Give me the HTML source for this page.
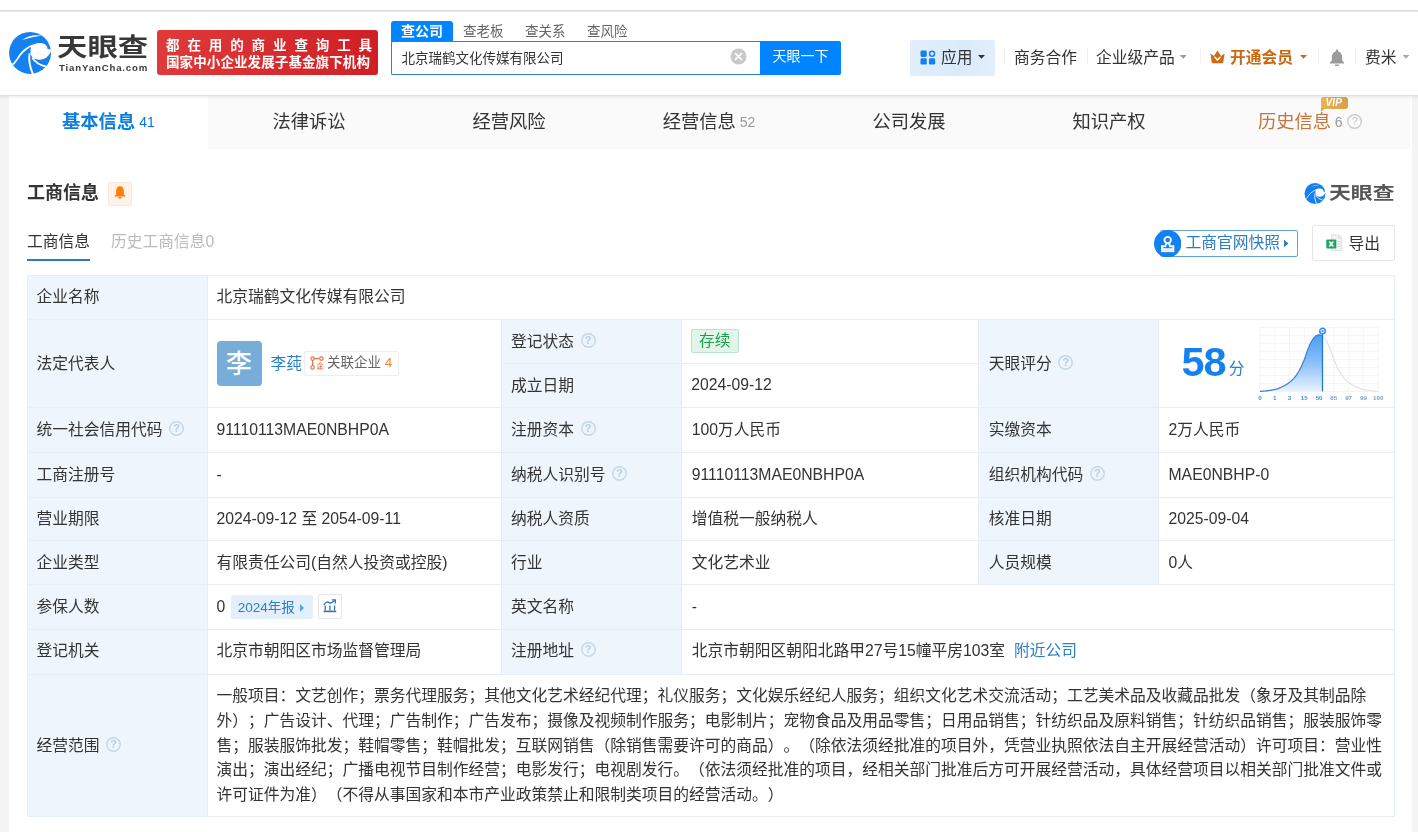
<!DOCTYPE html>
<html lang="zh-CN">
<head>
<meta charset="utf-8">
<title>北京瑞鹤文化传媒有限公司 - 天眼查</title>
<style>
*{box-sizing:border-box;margin:0;padding:0}
html,body{width:1418px;height:832px;overflow:hidden}
body{background:#f4f4f4;font-family:"Liberation Sans","Noto Sans CJK SC",sans-serif;color:#333;font-size:16px;position:relative}
.abs{position:absolute;will-change:transform}
#topstrip{left:0;top:0;width:1418px;height:10px;background:#fff}
#topline{left:0;top:10px;width:1418px;height:2px;background:linear-gradient(#dcdcdc,#e6e6e6)}
#header{left:0;top:12px;width:1418px;height:83.2px;background:#fff;}
/* logo */
#logoicon{left:4px;top:26px;width:56px;height:54px}
#logotext{left:57px;top:30px;font-size:25px;line-height:34px;font-weight:700;color:#383838;letter-spacing:0px;white-space:nowrap;transform:scaleX(1.215);transform-origin:0 0}
#logosub{left:59px;top:61.5px;font-size:9.6px;line-height:12px;font-weight:700;color:#383838;letter-spacing:0.86px;white-space:nowrap}
#banner{left:157px;top:30px;width:221px;height:45px;border-radius:3px;background:linear-gradient(90deg,#e03a3a,#cf1f25);color:#fff;font-weight:700;white-space:nowrap}
#banner .l1{position:absolute;left:9px;top:6.5px;font-size:13.5px;line-height:18px;letter-spacing:7.9px}
#banner .l2{position:absolute;left:9px;top:24.3px;font-size:13.5px;line-height:18px;letter-spacing:0.1px}
/* search */
.stab{top:21px;height:20.5px;line-height:22px;font-size:13.5px;color:#666;white-space:nowrap}
#stab1{left:391px;width:62px;background:#0084ff;color:#fff;text-align:center;border-radius:3px 3px 0 0;font-weight:700;font-size:14px;line-height:21px}
#sinput{left:391px;top:41px;width:370px;height:34px;border:1px solid #2c85c4;border-right:none;border-radius:2px 0 0 2px;background:#fff;font-size:13.5px;line-height:34.5px;padding-left:9.5px;color:#333;white-space:nowrap}
#sclear{left:730px;top:48px;width:17px;height:17px}
#sbtn{left:760px;top:41px;width:81px;height:34px;background:#0084ff;color:#fff;font-size:14px;line-height:30.5px;text-align:center;border-radius:0 2px 2px 0;white-space:nowrap}
/* right nav */
.nav{top:47px;font-size:15.75px;line-height:22px;color:#333;white-space:nowrap}
.caret{display:inline-block;width:7px;height:3.8px;background:#999;clip-path:polygon(0 0,100% 0,50% 100%);vertical-align:middle;margin-left:5px;position:relative;top:-2px}
.sep{top:48px;width:1px;height:16px;background:#f1f1f1}
#appbtn{left:910px;top:40px;width:85px;height:35.5px;background:linear-gradient(100deg,#e1eefc,#d9ebfb 60%,#e3effc);border-radius:2px}
/* tabs */
#tabs{left:9px;top:95.5px;width:1400.5px;height:53.2px;background:#fafafa}
.tab{top:96px;width:200px;height:52px;line-height:51px;text-align:center;font-size:18.3px;color:#333;white-space:nowrap}
.tab small{font-size:14px;color:#999;margin-left:4px;position:relative;top:-1.3px;font-family:"Liberation Sans",sans-serif}
#tab1{left:9px;background:#fff;color:#0a7fe0;font-weight:700;width:198.8px;top:95.5px;height:53.2px;line-height:51px}
#tab1 small{color:#0077d9;font-weight:400}
#main{left:9px;top:95.5px;width:1403.3px;height:740px;background:#fff}
/* section */
#sectitle{left:27px;top:181px;font-size:18px;line-height:24px;font-weight:700;color:#333;white-space:nowrap}
#bellbox{left:108px;top:182px;width:24px;height:24px;background:#fdf3ea;border:1px solid #fbe8d8;border-radius:2px}
#sub1{left:27px;top:230.5px;font-size:15.75px;line-height:22px;color:#333;white-space:nowrap}
#sub1line{left:27px;top:258.7px;width:63px;height:2.4px;background:#2e7cb8}
#sub2{left:111px;top:230.5px;font-size:15.75px;line-height:22px;color:#bbb;white-space:nowrap}
#wm{left:1305px;top:181px;white-space:nowrap}
#snapbtn{left:1160px;top:230px;width:138px;height:26.5px;border:1px solid #62a3d8;border-radius:2px;background:#fff}
#snapbtn .t{position:absolute;left:24.5px;top:1px;font-size:15.75px;line-height:22px;color:#2e7cc4;white-space:nowrap}
#expbtn{left:1312px;top:225px;width:83px;height:36px;border:1px solid #e6e6e6;border-radius:2px;background:#fff}
#expbtn .t{position:absolute;left:35.5px;top:6.5px;font-size:15.75px;line-height:22px;color:#333;white-space:nowrap}
/* table */
#tbl{left:27px;top:275px;width:1368px;height:542px;border:1px solid #e3edf3;background:#fff}
.c{position:absolute;border-right:1px solid #e6edf2;border-bottom:1px solid #e9edf0;font-size:15.75px;line-height:22px;text-spacing-trim:space-all;color:#333;white-space:nowrap;padding-left:8.5px;display:flex;align-items:center}
.l{background:#eff5fc;border-bottom-color:#e6eef6}
.q{display:inline-block;width:15px;height:15px;box-shadow:inset 0 0 0 1.5px #c3d8e7;border-radius:50%;color:#b5cee0;font-size:11px;font-weight:700;line-height:15px;text-align:center;margin-left:6.5px;font-family:"Liberation Sans",sans-serif;position:relative;top:-1.2px}
a,.lnk{color:#2b7fc5;text-decoration:none}

#tbl{border:none;border-left:1px solid #e6edf2;border-top:1px solid #e9edf0}
.avatar{display:inline-block;width:45px;height:45px;border-radius:4px;background:#78acd9;color:#fff;font-size:26px;font-weight:500;line-height:46px;text-align:center}
.rel{display:inline-block;margin-left:2px;height:25px;border:1px solid #eee;border-radius:2px;padding:0 5px 0 5px;font-size:13.5px;line-height:22px;color:#666}
.rel b{color:#e8873a;font-weight:400}
.tag-g{display:inline-block;height:25px;line-height:23px;padding:0 7px;border:1px solid #bfe8cc;background:#e4f7ea;color:#1f9d4c;font-size:15px;border-radius:2px}
.tag-b{display:inline-block;height:24px;line-height:25px;padding:0 9.3px 0 7px;margin-left:5.5px;background:#e3f0fc;color:#2b7fc5;font-size:13.5px;border-radius:2px;position:relative;top:-0.5px}
.tri{display:inline-block;width:4.2px;height:8.2px;background:#5a9fe0;clip-path:polygon(0 0,100% 50%,0 100%);margin-left:5px;position:relative;top:0.5px}
.ico-box{display:inline-flex;align-items:center;justify-content:center;width:24px;height:25px;border:1px solid #e3e8ee;border-radius:2px;margin-left:5px;position:relative;top:-1px}
.scope{white-space:nowrap;line-height:24.75px;font-size:15.75px;text-spacing-trim:space-all;position:relative;top:0.6px}

#vip{left:1321px;top:97px;width:27px;height:12px;border-radius:2px 3px 3px 0;background:linear-gradient(90deg,#e9b556,#d9a040);}
#vip span{position:absolute;left:4.5px;top:-0.5px;font-size:10px;line-height:12px;font-weight:700;font-style:italic;color:#fff;letter-spacing:0.2px;font-family:"Liberation Sans",sans-serif}
#vip i{position:absolute;left:0;top:11px;width:4px;height:4px;background:#dca548;clip-path:polygon(0 0,100% 0,0 100%)}
#wmtext{left:1329px;top:181px;font-size:17.5px;line-height:24px;font-weight:700;color:#555;white-space:nowrap;transform:scaleX(1.25);transform-origin:0 0}

.sc58{font-family:"Liberation Sans",sans-serif;font-weight:700;font-size:41.5px;line-height:44px;color:#1580f0;margin-left:13px;letter-spacing:-1px;position:relative;top:-1.2px}
.scfen{font-size:15.75px;color:#2b7fc5;margin-left:3px;position:relative;top:5.5px}
.tag-g{height:24px;line-height:22px;padding:0 7.5px;font-size:15.75px;border-color:#b8e4c7;background:#e0f6e8}
.rel{padding-right:6px}
#hshadow{left:0;top:95px;width:1418px;height:4.5px;background:linear-gradient(rgba(0,0,0,.085),rgba(0,0,0,.03) 45%,rgba(0,0,0,0))}
</style>
</head>
<body>
<div class="abs" id="topstrip"></div>
<div class="abs" id="topline"></div>
<div class="abs" id="header"></div>

<!-- logo -->
<svg class="abs" id="logoicon" viewBox="0 0 863 832">
  <circle cx="401.5" cy="415" r="323" fill="#1580f0"/>
  <path d="M420 300 C480 255 590 245 645 292 Q675 325 668 350 L740 368 L740 400 L722 396 Q700 445 650 488 Q560 545 450 497 Q385 440 420 300Z" fill="#fff"/>
  <path d="M280 215 Q400 120 585 148 Q440 168 280 215Z" fill="#fff"/>
  <path d="M118 590 Q160 560 230 445 Q310 340 430 290 L440 312 Q330 360 255 460 Q190 560 150 600Z" fill="#fff"/>
  <path d="M396 420 Q368 560 445 740" fill="none" stroke="#fff" stroke-width="30"/>
  <path d="M436 488 Q500 590 655 628" fill="none" stroke="#fff" stroke-width="28"/>
</svg>
<div class="abs" id="logotext">天眼查</div>
<div class="abs" id="logosub">TianYanCha.com</div>
<div class="abs" id="banner"><div class="l1">都在用的商业查询工具</div><div class="l2">国家中小企业发展子基金旗下机构</div></div>

<!-- search -->
<div class="abs stab" id="stab1">查公司</div>
<div class="abs stab" style="left:463px">查老板</div>
<div class="abs stab" style="left:525px">查关系</div>
<div class="abs stab" style="left:587px">查风险</div>
<div class="abs" id="sinput">北京瑞鹤文化传媒有限公司</div>
<svg class="abs" id="sclear" viewBox="0 0 17 17"><circle cx="8.5" cy="8.5" r="8" fill="#c9c9c9"/><path d="M5.6 5.6l5.8 5.8M11.4 5.6l-5.8 5.8" stroke="#fff" stroke-width="1.6" stroke-linecap="round"/></svg>
<div class="abs" id="sbtn">天眼一下</div>

<!-- right nav -->
<div class="abs" id="appbtn"></div>
<svg class="abs" style="left:920px;top:50px;width:16px;height:15px" viewBox="0 0 16 15"><g fill="#1580f0"><rect x="0.5" y="0.6" width="6.3" height="6.3" rx="1.4"/><rect x="0.5" y="8.3" width="6.3" height="6.3" rx="1.4"/><rect x="8.9" y="8.3" width="6.3" height="6.3" rx="1.4"/></g><circle cx="12.05" cy="3.75" r="2.5" fill="none" stroke="#1580f0" stroke-width="1.5"/></svg>
<div class="abs nav" style="left:941px">应用<span class="caret" style="background:#333;margin-left:5.5px"></span></div>
<div class="abs sep" style="left:1004px"></div>
<div class="abs nav" style="left:1014px">商务合作</div>
<div class="abs sep" style="left:1087px"></div>
<div class="abs nav" style="left:1096px">企业级产品<span class="caret"></span></div>
<div class="abs sep" style="left:1200px"></div>
<svg class="abs" style="left:1210px;top:50px;width:15px;height:14px" viewBox="0 0 15 14"><path d="M0.4 3.4 L3.9 6 L7.5 0.5 L11.1 6 L14.6 3.4 L13.3 12.2 Q13.2 13.2 12.2 13.2 L2.8 13.2 Q1.8 13.2 1.7 12.2Z" fill="#cf6b17"/><path d="M4.9 7.2 L7.5 10 L10.1 7.2" fill="none" stroke="#fff" stroke-width="1.5" stroke-linecap="round" stroke-linejoin="round"/></svg>
<div class="abs nav" style="left:1230px;color:#c8690f;font-weight:700">开通会员<span class="caret" style="background:#c8690f;margin-left:7px"></span></div>
<div class="abs sep" style="left:1318px"></div>
<svg class="abs" style="left:1329px;top:49px;width:16px;height:18px" viewBox="0 0 16 18"><path d="M8 0.6 a1.3 1.3 0 0 1 1.3 1.3 v0.5 C12 3.2 13.2 5.4 13.2 8 V11.6 L15 13.6 V14.4 H1 V13.6 L2.8 11.6 V8 C2.8 5.4 4 3.2 6.7 2.4 V1.9 A1.3 1.3 0 0 1 8 0.6Z" fill="#9b9b9b"/><rect x="5.8" y="15.6" width="4.4" height="1.3" rx="0.6" fill="#9b9b9b"/></svg>
<div class="abs sep" style="left:1355px"></div>
<div class="abs nav" style="left:1365px">费米<span class="caret" style="margin-left:6px;background:#aaa"></span></div>

<!-- tabs -->
<div class="abs" id="main"></div>
<div class="abs" id="tabs"></div>
<div class="abs tab" id="tab1">基本信息<small>41</small></div>
<div class="abs tab" style="left:208.75px">法律诉讼</div>
<div class="abs tab" style="left:408.75px">经营风险</div>
<div class="abs tab" style="left:608.75px">经营信息<small>52</small></div>
<div class="abs tab" style="left:808.75px">公司发展</div>
<div class="abs tab" style="left:1008.75px">知识产权</div>
<div class="abs tab" style="left:1258px;width:auto;text-align:left;color:#c8733c">历史信息<small style="margin-left:3.5px">6</small><span class="q" style="box-shadow:inset 0 0 0 1.4px #cbcbcb;color:#c2c2c2;margin-left:5px;top:-2px;vertical-align:middle;font-weight:400">?</span></div>
<div class="abs" id="vip"><i></i><span>VIP</span></div>

<div class="abs" id="hshadow"></div>
<!-- section -->
<div class="abs" id="sectitle">工商信息</div>
<div class="abs" id="bellbox"></div>
<svg class="abs" style="left:114px;top:186px;width:12px;height:13px" viewBox="0 0 12 13"><path d="M6 0.2 C8.6 0.2 9.8 2.2 9.8 4.6 V8 L11.3 9.8 V10.4 H0.7 V9.8 L2.2 8 V4.6 C2.2 2.2 3.4 0.2 6 0.2Z" fill="#ff7d00"/><path d="M4.2 11 H7.8 A1.8 1.8 0 0 1 4.2 11Z" fill="#ff7d00"/></svg>
<div class="abs" id="sub1">工商信息</div>
<div class="abs" id="sub1line"></div>
<div class="abs" id="sub2">历史工商信息0</div>
<svg class="abs" style="left:1302px;top:180px;width:28px;height:27px" viewBox="0 0 863 832">
  <circle cx="401.5" cy="415" r="323" fill="#1580f0"/>
  <path d="M420 300 C480 258 590 250 640 295 Q668 325 662 352 L735 372 L735 398 L718 396 Q700 445 650 488 Q560 540 450 495 Q395 440 420 300Z" fill="#fff"/>
  <path d="M288 208 Q420 138 580 150 Q430 168 288 208Z" fill="#fff"/>
  <path d="M130 580 Q230 390 425 296" fill="none" stroke="#fff" stroke-width="22"/>
  <path d="M396 420 Q372 560 447 735" fill="none" stroke="#fff" stroke-width="26"/>
  <path d="M440 492 Q500 590 650 625" fill="none" stroke="#fff" stroke-width="24"/>
</svg>
<div class="abs" id="wmtext">天眼查</div>
<div class="abs" id="snapbtn"><span class="t">工商官网快照</span><i style="position:absolute;left:123px;top:8.7px;width:4.5px;height:7.6px;background:#2e7cc4;clip-path:polygon(0 0,100% 50%,0 100%)"></i></div>
<svg class="abs" style="left:1154px;top:229.7px;width:27.4px;height:27.4px" viewBox="0 0 28 28"><circle cx="14" cy="14" r="14" fill="#1580f0"/><g fill="none" stroke="#fff" stroke-width="1.9"><circle cx="14" cy="10.3" r="3.3"/><path d="M12.6 13.2 L11.6 16.6 H8.2 V19.6 H19.8 V16.6 H16.4 L15.4 13.2"/></g><rect x="7.2" y="20.6" width="13.6" height="2" fill="#fff"/></svg>
<div class="abs" id="expbtn"><span class="t">导出</span></div>
<svg class="abs" style="left:1326px;top:234px;width:17px;height:18px" viewBox="0 0 17 18"><path d="M5.5 0.8 H12.5 L15.8 4 V16.6 H5.5Z" fill="#f4f4f4" stroke="#d9d9d9" stroke-width="0.8"/><path d="M12.5 0.8 V4 H15.8" fill="#e6e6e6" stroke="#d9d9d9" stroke-width="0.6"/><path d="M11.5 7.5h3M11.5 10h3M11.5 12.5h3" stroke="#d0d0d0" stroke-width="0.9"/><rect x="0.3" y="5.4" width="10" height="9.2" rx="0.8" fill="#21a366"/><path d="M3.2 7.6 L7.4 12.4 M7.4 7.6 L3.2 12.4" stroke="#fff" stroke-width="1.5"/></svg>

<!-- table -->
<div class="abs" id="tbl">
<div class="c l" style="left:0px;top:0px;width:180px;height:44px;padding-bottom:1.3px;padding-left:8.5px;">企业名称</div>
<div class="c" style="left:180px;top:0px;width:1187px;height:44px;padding-bottom:1.3px;padding-left:8.5px;">北京瑞鹤文化传媒有限公司</div>
<div class="c l" style="left:0px;top:44px;width:180px;height:88px;padding-left:8.5px;">法定代表人</div>
<div class="c" style="left:180px;top:44px;width:294px;height:88px;padding-left:8.5px;"><span class="avatar">李</span><span class="lnk" style="margin-left:9px">李莼</span><span class="rel"><svg width="14" height="14" viewBox="0 0 14 14" style="vertical-align:-2.5px;margin-right:3px"><g fill="none" stroke="#e8734a" stroke-width="1.2"><circle cx="2.6" cy="2.6" r="1.7"/><circle cx="11.4" cy="2.6" r="1.7"/><circle cx="2.6" cy="11.4" r="1.7"/><path d="M4.3 2.6h5.4M2.6 4.3v5.4"/><path d="M7.2 9.3 L10.2 6.8 L13.2 9.3M10.2 8.6V12.6M10.2 10.6h2.2M8.2 10.4v2.2M7.2 12.9h6" stroke-width="1"/></g></svg>关联企业 <b>4</b></span></div>
<div class="c l" style="left:474px;top:44px;width:180px;height:44px;padding-left:9.1px;">登记状态<span class="q">?</span></div>
<div class="c" style="left:654px;top:44px;width:297px;height:44px;padding-left:8.6px;padding-bottom:2px;"><span class="tag-g">存续</span></div>
<div class="c l" style="left:474px;top:88px;width:180px;height:44px;padding-left:9.1px;">成立日期</div>
<div class="c" style="left:654px;top:88px;width:297px;height:44px;padding-left:9.3px;padding-bottom:2px;">2024-09-12</div>
<div class="c l" style="left:951px;top:44px;width:180px;height:88px;padding-left:9.8px;">天眼评分<span class="q">?</span></div>
<div class="c" style="left:1131px;top:44px;width:236px;height:88px;padding-left:9.5px;"><span class="sc58">58</span><span class="scfen">分</span></div>
<div class="c l" style="left:0px;top:132px;width:180px;height:45px;padding-left:8.5px;">统一社会信用代码<span class="q">?</span></div>
<div class="c" style="left:180px;top:132px;width:294px;height:45px;padding-left:8.5px;">91110113MAE0NBHP0A</div>
<div class="c l" style="left:474px;top:132px;width:180px;height:45px;padding-left:9.1px;">注册资本<span class="q">?</span></div>
<div class="c" style="left:654px;top:132px;width:297px;height:45px;padding-left:9.7px;">100万人民币</div>
<div class="c l" style="left:951px;top:132px;width:180px;height:45px;padding-left:9.8px;">实缴资本</div>
<div class="c" style="left:1131px;top:132px;width:236px;height:45px;padding-left:9.5px;">2万人民币</div>
<div class="c l" style="left:0px;top:177px;width:180px;height:45px;padding-left:8.5px;">工商注册号</div>
<div class="c" style="left:180px;top:177px;width:294px;height:45px;padding-left:8.5px;">-</div>
<div class="c l" style="left:474px;top:177px;width:180px;height:45px;padding-left:9.1px;">纳税人识别号<span class="q">?</span></div>
<div class="c" style="left:654px;top:177px;width:297px;height:45px;padding-left:9.7px;">91110113MAE0NBHP0A</div>
<div class="c l" style="left:951px;top:177px;width:180px;height:45px;padding-left:9.8px;">组织机构代码<span class="q">?</span></div>
<div class="c" style="left:1131px;top:177px;width:236px;height:45px;padding-left:9.5px;">MAE0NBHP-0</div>
<div class="c l" style="left:0px;top:222px;width:180px;height:43px;padding-left:8.5px;">营业期限</div>
<div class="c" style="left:180px;top:222px;width:294px;height:43px;padding-left:8.5px;">2024-09-12 至 2054-09-11</div>
<div class="c l" style="left:474px;top:222px;width:180px;height:43px;padding-left:9.1px;">纳税人资质</div>
<div class="c" style="left:654px;top:222px;width:297px;height:43px;padding-left:9.7px;">增值税一般纳税人</div>
<div class="c l" style="left:951px;top:222px;width:180px;height:43px;padding-left:9.8px;">核准日期</div>
<div class="c" style="left:1131px;top:222px;width:236px;height:43px;padding-left:9.5px;">2025-09-04</div>
<div class="c l" style="left:0px;top:265px;width:180px;height:44px;padding-left:8.5px;">企业类型</div>
<div class="c" style="left:180px;top:265px;width:294px;height:44px;padding-left:8.5px;">有限责任公司(自然人投资或控股)</div>
<div class="c l" style="left:474px;top:265px;width:180px;height:44px;padding-left:9.1px;">行业</div>
<div class="c" style="left:654px;top:265px;width:297px;height:44px;padding-left:9.7px;">文化艺术业</div>
<div class="c l" style="left:951px;top:265px;width:180px;height:44px;padding-left:9.8px;">人员规模</div>
<div class="c" style="left:1131px;top:265px;width:236px;height:44px;padding-left:9.5px;">0人</div>
<div class="c l" style="left:0px;top:309px;width:180px;height:45px;padding-left:8.5px;">参保人数</div>
<div class="c" style="left:180px;top:309px;width:294px;height:45px;padding-left:8.5px;">0<span class="tag-b">2024年报<i class="tri"></i></span><span class="ico-box"><svg width="14" height="14" viewBox="0 0 14 14"><g fill="none" stroke="#2e72b8" stroke-width="1.3"><path d="M0.6 12.4H13.2" stroke-width="1.6"/><path d="M2.2 11.4V6.6M6.9 11.4V6.6M11.6 11.4V6.6"/><path d="M0.8 6.2 Q3.5 1.6 6 3.6 Q8 5 11.8 1.2"/><path d="M8.8 0.9H12.3V4.4"/></g></svg></span></div>
<div class="c l" style="left:474px;top:309px;width:180px;height:45px;padding-left:9.1px;">英文名称</div>
<div class="c" style="left:654px;top:309px;width:713px;height:45px;padding-left:9.7px;">-</div>
<div class="c l" style="left:0px;top:354px;width:180px;height:45px;padding-bottom:2px;padding-left:8.5px;">登记机关</div>
<div class="c" style="left:180px;top:354px;width:294px;height:45px;padding-bottom:2px;padding-left:8.5px;">北京市朝阳区市场监督管理局</div>
<div class="c l" style="left:474px;top:354px;width:180px;height:45px;padding-bottom:2px;padding-left:9.1px;">注册地址<span class="q">?</span></div>
<div class="c" style="left:654px;top:354px;width:713px;height:45px;padding-bottom:2px;padding-left:9.7px;">北京市朝阳区朝阳北路甲27号15幢平房103室<span class="lnk" style="margin-left:9px">附近公司</span></div>
<div class="c l" style="left:0px;top:399px;width:180px;height:142px;padding-left:8.5px;">经营范围<span class="q">?</span></div>
<div class="c" style="left:180px;top:399px;width:1187px;height:142px;padding-left:8.5px;"><div class="scope">一般项目：文艺创作；票务代理服务；其他文化艺术经纪代理；礼仪服务；文化娱乐经纪人服务；组织文化艺术交流活动；工艺美术品及收藏品批发（象牙及其制品除<br>外）；广告设计、代理；广告制作；广告发布；摄像及视频制作服务；电影制片；宠物食品及用品零售；日用品销售；针纺织品及原料销售；针纺织品销售；服装服饰零<br>售；服装服饰批发；鞋帽零售；鞋帽批发；互联网销售（除销售需要许可的商品）。（除依法须经批准的项目外，凭营业执照依法自主开展经营活动）许可项目：营业性<br>演出；演出经纪；广播电视节目制作经营；电影发行；电视剧发行。（依法须经批准的项目，经相关部门批准后方可开展经营活动，具体经营项目以相关部门批准文件或<br>许可证件为准）（不得从事国家和本市产业政策禁止和限制类项目的经营活动。）</div></div>
</div>
<svg class="abs" id="chart" style="left:1256px;top:324px;width:128px;height:80px" viewBox="0 0 128 80">
<defs><linearGradient id="gfill" x1="0" y1="0" x2="0" y2="1"><stop offset="0" stop-color="#4a9df3"/><stop offset="0.5" stop-color="#8cc0f8"/><stop offset="1" stop-color="#e9f3fe"/></linearGradient></defs>
<path d="M3.9 3.4 V67.5 M18.7 3.4 V67.5 M33.5 3.4 V67.5 M48.3 3.4 V67.5 M63.1 3.4 V67.5 M77.8 3.4 V67.5 M92.6 3.4 V67.5 M107.4 3.4 V67.5 M122.2 3.4 V67.5 M3.9 3.4 H122.2 M3.9 11.4 H122.2 M3.9 19.4 H122.2 M3.9 27.4 H122.2 M3.9 35.5 H122.2 M3.9 43.5 H122.2 M3.9 51.5 H122.2 M3.9 59.5 H122.2 M3.9 67.5 H122.2" fill="none" stroke="#eff3f7" stroke-width="0.8"/>
<path d="M3.9 67.3 L4.4 67.3 L4.9 67.3 L5.4 67.3 L5.9 67.2 L6.4 67.2 L6.9 67.2 L7.4 67.2 L7.9 67.1 L8.4 67.1 L8.9 67.0 L9.3 67.0 L9.8 66.9 L10.3 66.9 L10.8 66.8 L11.3 66.8 L11.8 66.7 L12.3 66.6 L12.8 66.5 L13.3 66.5 L13.8 66.4 L14.3 66.3 L14.8 66.2 L15.3 66.1 L15.8 66.1 L16.2 66.0 L16.7 65.9 L17.2 65.8 L17.7 65.7 L18.2 65.6 L18.7 65.5 L19.2 65.4 L19.7 65.3 L20.2 65.2 L20.7 65.0 L21.2 64.9 L21.7 64.7 L22.2 64.5 L22.7 64.3 L23.1 64.1 L23.6 63.9 L24.1 63.7 L24.6 63.5 L25.1 63.3 L25.6 63.0 L26.1 62.8 L26.6 62.6 L27.1 62.3 L27.6 62.1 L28.1 61.8 L28.6 61.6 L29.1 61.3 L29.6 61.0 L30.0 60.7 L30.5 60.4 L31.0 60.1 L31.5 59.8 L32.0 59.4 L32.5 59.1 L33.0 58.7 L33.5 58.3 L34.0 57.9 L34.5 57.5 L35.0 57.1 L35.5 56.7 L36.0 56.2 L36.5 55.8 L36.9 55.3 L37.4 54.8 L37.9 54.2 L38.4 53.7 L38.9 53.1 L39.4 52.5 L39.9 51.8 L40.4 51.1 L40.9 50.4 L41.4 49.6 L41.9 48.8 L42.4 48.0 L42.9 47.2 L43.4 46.3 L43.8 45.4 L44.3 44.4 L44.8 43.4 L45.3 42.4 L45.8 41.3 L46.3 40.2 L46.8 39.0 L47.3 37.8 L47.8 36.7 L48.3 35.5 L48.8 34.2 L49.3 32.9 L49.8 31.5 L50.3 30.0 L50.7 28.6 L51.2 27.2 L51.7 25.9 L52.2 24.6 L52.7 23.4 L53.2 22.2 L53.7 21.1 L54.2 20.0 L54.7 18.9 L55.2 18.0 L55.7 17.1 L56.2 16.3 L56.7 15.5 L57.2 14.8 L57.6 14.1 L58.1 13.6 L58.6 13.1 L59.1 12.6 L59.6 12.1 L60.1 11.8 L60.6 11.5 L61.1 11.3 L61.6 11.1 L62.1 11.0 L62.6 10.9 L63.1 10.8 L63.6 10.9 L64.1 11.0 L64.5 11.1 L65.0 11.3 L65.5 11.5 L66.0 11.8 L66.5 12.1 L66.5 67.5 L3.9 67.5Z" fill="url(#gfill)"/>
<path d="M66.5 12.1 L67.0 12.6 L67.5 13.1 L68.0 13.6 L68.5 14.1 L69.0 14.8 L69.5 15.5 L70.0 16.3 L70.5 17.1 L70.9 18.0 L71.4 18.9 L71.9 20.0 L72.4 21.1 L72.9 22.2 L73.4 23.4 L73.9 24.6 L74.4 25.9 L74.9 27.2 L75.4 28.6 L75.9 30.0 L76.4 31.5 L76.9 32.9 L77.4 34.2 L77.8 35.5 L78.3 36.7 L78.8 37.8 L79.3 39.0 L79.8 40.2 L80.3 41.3 L80.8 42.4 L81.3 43.4 L81.8 44.4 L82.3 45.4 L82.8 46.3 L83.3 47.2 L83.8 48.0 L84.3 48.8 L84.7 49.6 L85.2 50.4 L85.7 51.1 L86.2 51.8 L86.7 52.5 L87.2 53.1 L87.7 53.7 L88.2 54.2 L88.7 54.8 L89.2 55.3 L89.7 55.8 L90.2 56.2 L90.7 56.7 L91.2 57.1 L91.6 57.5 L92.1 57.9 L92.6 58.3 L93.1 58.7 L93.6 59.1 L94.1 59.4 L94.6 59.8 L95.1 60.1 L95.6 60.4 L96.1 60.7 L96.6 61.0 L97.1 61.3 L97.6 61.6 L98.1 61.8 L98.5 62.1 L99.0 62.3 L99.5 62.6 L100.0 62.8 L100.5 63.0 L101.0 63.3 L101.5 63.5 L102.0 63.7 L102.5 63.9 L103.0 64.1 L103.5 64.3 L104.0 64.5 L104.5 64.7 L105.0 64.9 L105.4 65.0 L105.9 65.2 L106.4 65.3 L106.9 65.4 L107.4 65.5 L107.9 65.6 L108.4 65.7 L108.9 65.8 L109.4 65.9 L109.9 66.0 L110.4 66.1 L110.9 66.1 L111.4 66.2 L111.9 66.3 L112.3 66.4 L112.8 66.5 L113.3 66.5 L113.8 66.6 L114.3 66.7 L114.8 66.8 L115.3 66.8 L115.8 66.9 L116.3 66.9 L116.8 67.0 L117.3 67.0 L117.8 67.1 L118.3 67.1 L118.8 67.2 L119.2 67.2 L119.7 67.2 L120.2 67.2 L120.7 67.3 L121.2 67.3 L121.7 67.3 L122.2 67.3" fill="none" stroke="#dcdfe3" stroke-width="1.1"/>
<path d="M3.9 67.3 L4.4 67.3 L4.9 67.3 L5.4 67.3 L5.9 67.2 L6.4 67.2 L6.9 67.2 L7.4 67.2 L7.9 67.1 L8.4 67.1 L8.9 67.0 L9.3 67.0 L9.8 66.9 L10.3 66.9 L10.8 66.8 L11.3 66.8 L11.8 66.7 L12.3 66.6 L12.8 66.5 L13.3 66.5 L13.8 66.4 L14.3 66.3 L14.8 66.2 L15.3 66.1 L15.8 66.1 L16.2 66.0 L16.7 65.9 L17.2 65.8 L17.7 65.7 L18.2 65.6 L18.7 65.5 L19.2 65.4 L19.7 65.3 L20.2 65.2 L20.7 65.0 L21.2 64.9 L21.7 64.7 L22.2 64.5 L22.7 64.3 L23.1 64.1 L23.6 63.9 L24.1 63.7 L24.6 63.5 L25.1 63.3 L25.6 63.0 L26.1 62.8 L26.6 62.6 L27.1 62.3 L27.6 62.1 L28.1 61.8 L28.6 61.6 L29.1 61.3 L29.6 61.0 L30.0 60.7 L30.5 60.4 L31.0 60.1 L31.5 59.8 L32.0 59.4 L32.5 59.1 L33.0 58.7 L33.5 58.3 L34.0 57.9 L34.5 57.5 L35.0 57.1 L35.5 56.7 L36.0 56.2 L36.5 55.8 L36.9 55.3 L37.4 54.8 L37.9 54.2 L38.4 53.7 L38.9 53.1 L39.4 52.5 L39.9 51.8 L40.4 51.1 L40.9 50.4 L41.4 49.6 L41.9 48.8 L42.4 48.0 L42.9 47.2 L43.4 46.3 L43.8 45.4 L44.3 44.4 L44.8 43.4 L45.3 42.4 L45.8 41.3 L46.3 40.2 L46.8 39.0 L47.3 37.8 L47.8 36.7 L48.3 35.5 L48.8 34.2 L49.3 32.9 L49.8 31.5 L50.3 30.0 L50.7 28.6 L51.2 27.2 L51.7 25.9 L52.2 24.6 L52.7 23.4 L53.2 22.2 L53.7 21.1 L54.2 20.0 L54.7 18.9 L55.2 18.0 L55.7 17.1 L56.2 16.3 L56.7 15.5 L57.2 14.8 L57.6 14.1 L58.1 13.6 L58.6 13.1 L59.1 12.6 L59.6 12.1 L60.1 11.8 L60.6 11.5 L61.1 11.3 L61.6 11.1 L62.1 11.0 L62.6 10.9 L63.1 10.8 L63.6 10.9 L64.1 11.0 L64.5 11.1 L65.0 11.3 L65.5 11.5 L66.0 11.8 L66.5 12.1" fill="none" stroke="#2f7fd6" stroke-width="1.2"/>
<path d="M66.5 8.8 V67.5" stroke="#2478d0" stroke-width="1.3"/>
<circle cx="66.5" cy="7.1" r="2.8" fill="#fff" stroke="#2f86e6" stroke-width="1.4"/>
<circle cx="66.5" cy="7.1" r="1.1" fill="#2f86e6"/>
<g font-family="Liberation Sans, sans-serif" font-size="6.2" font-weight="700"><text x="3.9" y="75.9" text-anchor="middle" fill="#3f8fe8">0</text><text x="18.7" y="75.9" text-anchor="middle" fill="#3f8fe8">1</text><text x="33.5" y="75.9" text-anchor="middle" fill="#3f8fe8">3</text><text x="48.3" y="75.9" text-anchor="middle" fill="#3f8fe8">15</text><text x="63.1" y="75.9" text-anchor="middle" fill="#3f8fe8">50</text><text x="77.8" y="75.9" text-anchor="middle" fill="#7c9cc0">85</text><text x="92.6" y="75.9" text-anchor="middle" fill="#7c9cc0">97</text><text x="107.4" y="75.9" text-anchor="middle" fill="#7c9cc0">99</text><text x="122.2" y="75.9" text-anchor="middle" fill="#7c9cc0">100</text></g>
</svg>
</body>
</html>
